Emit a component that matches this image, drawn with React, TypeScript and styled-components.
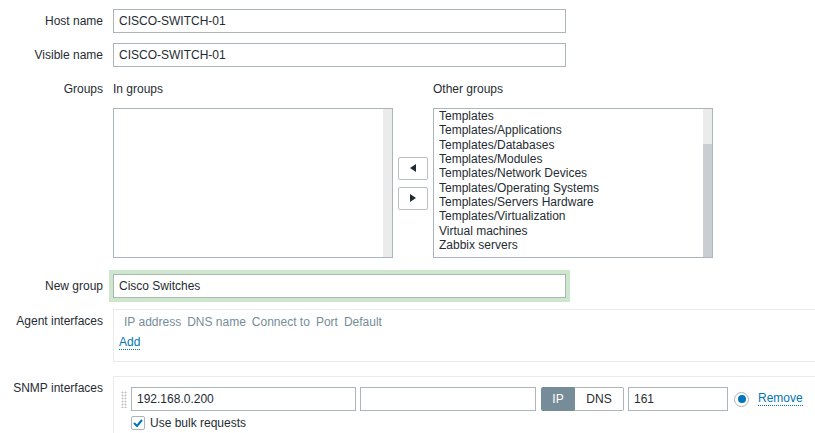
import React from 'react';
import styled, { createGlobalStyle } from 'styled-components';

const GlobalStyle = createGlobalStyle`
  html, body {
    margin: 0;
    padding: 0;
    background: #fff;
    overflow: hidden;
  }
  body {
    font-family: "Liberation Sans", Arial, sans-serif;
    font-size: 12px;
    color: #1f2c33;
  }
  * {
    box-sizing: border-box;
  }
`;

const StyledForm = styled.form`
  display: flex;
  flex-direction: column;
  padding-top: 9px;
  width: 100%;
`;

const StyledRow = styled.div<{ $mt?: number }>`
  display: grid;
  grid-template-columns: 103px 1fr;
  column-gap: 10px;
  margin-top: ${(p) => p.$mt ?? 0}px;
`;

const StyledLabel = styled.label`
  text-align: right;
  line-height: 24px;
  white-space: nowrap;
`;

const StyledInput = styled.input<{ $w?: number; $ml?: number }>`
  width: ${(p) => p.$w ?? 453}px;
  height: 24px;
  margin-left: ${(p) => p.$ml ?? 0}px;
  padding: 0 5px;
  border: 1px solid #acb5ba;
  background: #fff;
  font-family: inherit;
  font-size: 12px;
  color: #1f2c33;
  outline: none;
`;

const StyledGlowInput = styled(StyledInput)`
  box-shadow: 0 0 0 4px #cde6cd;
  border-color: #a9b8b0;
`;

const StyledGroups = styled.div`
  display: grid;
  grid-template-columns: 280px 40px 280px;
  grid-template-rows: 24px 150px;
  row-gap: 7px;
`;

const StyledGroupHead = styled.div`
  line-height: 24px;
`;

const StyledListBox = styled.div`
  display: flex;
  height: 150px;
  border: 1px solid #acb5ba;
  background: #fff;
`;

const StyledItems = styled.div`
  flex: 1;
  padding: 0 5px;
`;

const StyledItem = styled.div`
  line-height: 14.33px;
  white-space: nowrap;
`;

const StyledTrack = styled.div`
  width: 9px;
  background: #ebebeb;
  display: flex;
  flex-direction: column;
`;

const StyledThumb = styled.div<{ $top: number }>`
  margin-top: ${(p) => p.$top}px;
  flex: 1;
  background: #c8ced2;
`;

const StyledMoveCol = styled.div`
  display: flex;
  flex-direction: column;
  align-items: center;
  justify-content: center;
  gap: 7px;
`;

const StyledMoveButton = styled.button`
  width: 30px;
  height: 23px;
  padding: 0;
  border: 1px solid #b8c0c4;
  border-radius: 2px;
  background: #fff;
  display: flex;
  align-items: center;
  justify-content: center;
`;

const StyledIfaceBox = styled.div<{ $pad: string }>`
  border: 1px solid #ebebeb;
  border-right: none;
  margin-right: -10px;
  padding: ${(p) => p.$pad};
`;

const StyledIfaceHead = styled.div`
  display: flex;
  gap: 6px;
  padding-left: 10px;
  line-height: 14px;
  color: #768d99;
`;

const StyledLink = styled.a`
  display: inline-block;
  color: #0275b8;
  text-decoration: none;
  line-height: 13px;
  border-bottom: 1px dotted #0275b8;
`;

const StyledAddWrap = styled.div`
  margin-top: 6px;
  padding-left: 5px;
`;

const StyledSnmpLine = styled.div`
  display: flex;
  align-items: center;
`;

const StyledHandle = styled.span`
  width: 6px;
  height: 17px;
  margin-right: 4px;
  background-image: radial-gradient(circle, #bcc3c7 0.9px, transparent 1.1px);
  background-size: 3px 3px;
`;

const StyledSegment = styled.div`
  display: flex;
  margin-left: 5px;
  height: 24px;
`;

const StyledSegButton = styled.span<{ $active?: boolean; $w: number }>`
  width: ${(p) => p.$w}px;
  display: flex;
  align-items: center;
  justify-content: center;
  border: 1px solid ${(p) => (p.$active ? '#768d99' : '#acb5ba')};
  border-left: ${(p) => (p.$active ? '1px solid #768d99' : 'none')};
  background: ${(p) => (p.$active ? '#768d99' : '#fff')};
  color: ${(p) => (p.$active ? '#fff' : '#1f2c33')};
  border-radius: ${(p) => (p.$active ? '2px 0 0 2px' : '0 2px 2px 0')};
`;

const StyledRadio = styled.span`
  width: 15px;
  height: 15px;
  margin-left: 6px;
  border: 1px solid #acb5ba;
  border-radius: 50%;
  display: flex;
  align-items: center;
  justify-content: center;
  &::after {
    content: '';
    width: 8px;
    height: 8px;
    border-radius: 50%;
    background: #0275b8;
  }
`;

const StyledRemove = styled(StyledLink)`
  margin-left: 9px;
`;

const StyledCheckRow = styled.label`
  display: flex;
  align-items: center;
  gap: 5px;
  margin-top: 5px;
  padding-left: 10px;
  line-height: 14px;
`;

const StyledCheckbox = styled.span`
  width: 14px;
  height: 14px;
  border: 1px solid #acb5ba;
  border-radius: 2px;
  display: flex;
  align-items: center;
  justify-content: center;
  background: #fff;
`;

const otherGroups = [
  'Templates',
  'Templates/Applications',
  'Templates/Databases',
  'Templates/Modules',
  'Templates/Network Devices',
  'Templates/Operating Systems',
  'Templates/Servers Hardware',
  'Templates/Virtualization',
  'Virtual machines',
  'Zabbix servers',
];

const Arrow = ({ dir }: { dir: 'left' | 'right' }) => (
  <svg width="6" height="8" viewBox="0 0 6 8">
    <path d={dir === 'left' ? 'M6 0 L0 4 L6 8 Z' : 'M0 0 L6 4 L0 8 Z'} fill="#1f2c33" />
  </svg>
);

const App = () => {
  return (
    <>
      <GlobalStyle />
      <StyledForm onSubmit={(e) => e.preventDefault()}>
        <StyledRow>
          <StyledLabel>Host name</StyledLabel>
          <StyledInput defaultValue="CISCO-SWITCH-01" />
        </StyledRow>

        <StyledRow $mt={10}>
          <StyledLabel>Visible name</StyledLabel>
          <StyledInput defaultValue="CISCO-SWITCH-01" />
        </StyledRow>

        <StyledRow $mt={10}>
          <StyledLabel>Groups</StyledLabel>
          <StyledGroups>
            <StyledGroupHead>In groups</StyledGroupHead>
            <span />
            <StyledGroupHead>Other groups</StyledGroupHead>

            <StyledListBox>
              <StyledItems />
              <StyledTrack />
            </StyledListBox>

            <StyledMoveCol>
              <StyledMoveButton type="button">
                <Arrow dir="left" />
              </StyledMoveButton>
              <StyledMoveButton type="button">
                <Arrow dir="right" />
              </StyledMoveButton>
            </StyledMoveCol>

            <StyledListBox>
              <StyledItems>
                {otherGroups.map((g) => (
                  <StyledItem key={g}>{g}</StyledItem>
                ))}
              </StyledItems>
              <StyledTrack>
                <StyledThumb $top={35} />
              </StyledTrack>
            </StyledListBox>
          </StyledGroups>
        </StyledRow>

        <StyledRow $mt={16}>
          <StyledLabel>New group</StyledLabel>
          <StyledGlowInput defaultValue="Cisco Switches" />
        </StyledRow>

        <StyledRow $mt={11}>
          <StyledLabel>Agent interfaces</StyledLabel>
          <StyledIfaceBox $pad="5px 0 11px 0">
            <StyledIfaceHead>
              <span>IP address</span>
              <span>DNS name</span>
              <span>Connect to</span>
              <span>Port</span>
              <span>Default</span>
            </StyledIfaceHead>
            <StyledAddWrap>
              <StyledLink href="#">Add</StyledLink>
            </StyledAddWrap>
          </StyledIfaceBox>
        </StyledRow>

        <StyledRow $mt={14}>
          <StyledLabel>SNMP interfaces</StyledLabel>
          <StyledIfaceBox $pad="10px 0 20px 7px">
            <StyledSnmpLine>
              <StyledHandle />
              <StyledInput $w={225} defaultValue="192.168.0.200" />
              <StyledInput $w={176} $ml={4} defaultValue="" />
              <StyledSegment>
                <StyledSegButton $active $w={34}>IP</StyledSegButton>
                <StyledSegButton $w={49}>DNS</StyledSegButton>
              </StyledSegment>
              <StyledInput $w={100} $ml={4} defaultValue="161" />
              <StyledRadio />
              <StyledRemove href="#">Remove</StyledRemove>
            </StyledSnmpLine>
            <StyledCheckRow>
              <StyledCheckbox>
                <svg width="10" height="8" viewBox="0 0 10 8">
                  <path d="M1 4 L4 7 L9 1" fill="none" stroke="#0275b8" strokeWidth="2" />
                </svg>
              </StyledCheckbox>
              Use bulk requests
            </StyledCheckRow>
          </StyledIfaceBox>
        </StyledRow>
      </StyledForm>
    </>
  );
};

export default App;
